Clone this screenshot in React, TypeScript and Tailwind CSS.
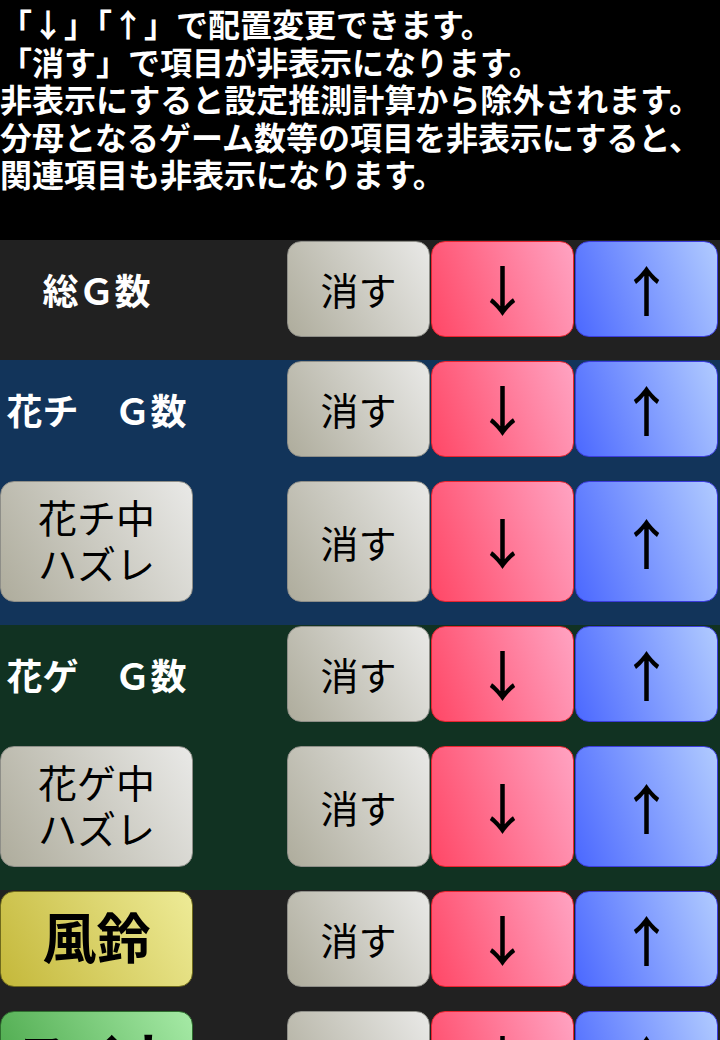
import React from "react";

type Label =
  | { kind: "text"; text: string }
  | { kind: "button"; lines: string[]; tone: "gray" | "yellow" | "green"; big?: boolean };

interface Row {
  id: number;
  label: Label;
  tall?: boolean;
}

interface Group {
  bg: string;
  rows: Row[];
}

const groups: Group[] = [
  { bg: "bg-[#212121]", rows: [{ id: 1, label: { kind: "text", text: "総Ｇ数" } }] },
  {
    bg: "bg-[#12345a]",
    rows: [
      { id: 2, label: { kind: "text", text: "花チ　Ｇ数" } },
      { id: 3, tall: true, label: { kind: "button", lines: ["花チ中", "ハズレ"], tone: "gray" } },
    ],
  },
  {
    bg: "bg-[#113222]",
    rows: [
      { id: 4, label: { kind: "text", text: "花ゲ　Ｇ数" } },
      { id: 5, tall: true, label: { kind: "button", lines: ["花ゲ中", "ハズレ"], tone: "gray" } },
    ],
  },
  {
    bg: "bg-[#212121]",
    rows: [
      { id: 6, label: { kind: "button", lines: ["風鈴"], tone: "yellow", big: true } },
      { id: 7, label: { kind: "button", lines: ["スイカ"], tone: "green", big: true } },
    ],
  },
];

const font = "font-['Noto_Sans_CJK_JP',sans-serif]";

// gradients run mostly left -> right, tilted slightly upward
const grayBtn = "border-[#8e8e88] bg-[linear-gradient(60deg,#aeac9c,#e9e9e7)]";
const toneClass = {
  gray: grayBtn,
  yellow: "border-[#6f6a1c] bg-[linear-gradient(60deg,#c4b83a,#eeeb97)]",
  green: "border-[#2f6e2f] bg-[linear-gradient(60deg,#45a445,#a6eaa6)]",
};

function LabelCell({ label, tall }: { label: Label; tall?: boolean }) {
  const h = tall ? "h-[121px]" : "h-[96px]";
  if (label.kind === "text") {
    return (
      <div className={`w-[193px] ${h} flex items-center justify-center text-white font-bold text-[36px] leading-none`}>
        {label.text}
      </div>
    );
  }
  return (
    <div
      className={`w-[193px] ${h} rounded-[14px] border flex flex-col items-center justify-center text-black ${toneClass[label.tone]} ${
        label.big ? "text-[54px] font-bold leading-none pb-[6px]" : "text-[39px] leading-[46px] pb-[5px]"
      }`}
    >
      {label.lines.map((l) => (
        <span key={l}>{l}</span>
      ))}
    </div>
  );
}

function RowView({ row }: { row: Row }) {
  const h = row.tall ? "h-[121px]" : "h-[96px]";
  return (
    <div className="flex pt-px pb-[23px]">
      <div className="w-[287px]">
        <LabelCell label={row.label} tall={row.tall} />
      </div>
      <button className={`w-[143px] ${h} rounded-[14px] border ${grayBtn} text-black text-[38px] leading-none flex items-center justify-center`}>
        消す
      </button>
      <button className={`ml-px w-[143px] ${h} rounded-[14px] border border-[#e8242f] bg-[linear-gradient(70deg,#ff4766,#ffa3c2)] text-black text-[54px] font-medium leading-none flex items-center justify-center`}>
        ↓
      </button>
      <button className={`ml-px w-[143px] ${h} rounded-[14px] border border-[#3c3cdc] bg-[linear-gradient(70deg,#4b68ff,#b1cbff)] text-black text-[54px] font-medium leading-none flex items-center justify-center`}>
        ↑
      </button>
    </div>
  );
}

export default function App() {
  return (
    <div className={`w-[720px] min-h-[1040px] bg-black ${font}`}>
      <div className="h-[240px] pt-[5px] text-white font-bold text-[32px] leading-[37.5px] whitespace-nowrap">
        <div>「↓」「↑」で配置変更できます。</div>
        <div>「消す」で項目が非表示になります。</div>
        <div>非表示にすると設定推測計算から除外されます。</div>
        <div>分母となるゲーム数等の項目を非表示にすると、</div>
        <div>関連項目も非表示になります。</div>
      </div>
      {groups.map((g, i) => (
        <div key={i} className={g.bg}>
          {g.rows.map((r) => (
            <RowView key={r.id} row={r} />
          ))}
        </div>
      ))}
    </div>
  );
}
